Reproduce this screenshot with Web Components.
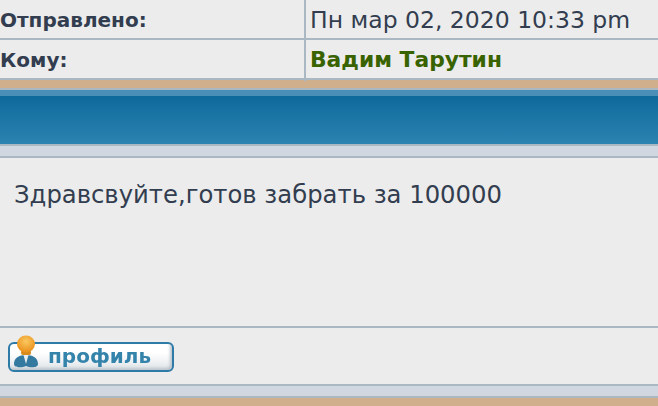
<!DOCTYPE html>
<html>
<head>
<meta charset="utf-8">
<style>
  html, body { margin: 0; padding: 0; }
  body { width: 658px; height: 406px; overflow: hidden; background: #ececec; font-family: "DejaVu Sans", sans-serif; color: #323d4f; }
</style>
</head>
<body>
<post-head>
  <head-row label="Отправлено:">Пн мар 02, 2020 10:33 pm</head-row>
  <head-row label="Кому:" strong>Вадим Тарутин</head-row>
</post-head>
<band-bar kind="tan"></band-bar>
<band-bar kind="blue"></band-bar>
<band-bar kind="pale"></band-bar>
<post-body>Здравсвуйте,готов забрать за 100000</post-body>
<post-foot><profile-button>профиль</profile-button></post-foot>
<band-bar kind="pale"></band-bar>
<band-bar kind="tan"></band-bar>

<script>
class PostHead extends HTMLElement {
  constructor () {
    super()
    this.attachShadow({ mode: 'open' }).innerHTML = `
      <style>:host { display: block; }</style>
      <slot></slot>`
  }
}

class HeadRow extends HTMLElement {
  constructor () {
    super()
    this.attachShadow({ mode: 'open' }).innerHTML = `
      <style>
        :host {
          display: grid;
          grid-template-columns: 304px 1fr;
          height: 40px;
          box-sizing: border-box;
          border-bottom: 2px solid #a9b8c2;
        }
        #label {
          font-size: 20px;
          font-weight: bold;
          line-height: 41px;
          white-space: nowrap;
        }
        #value {
          border-left: 2px solid #a9b8c2;
          padding-left: 4px;
          font-size: 23.5px;
          line-height: 40px;
          white-space: nowrap;
        }
        :host([strong]) #value {
          font-size: 21.8px;
          font-weight: bold;
          color: #386300;
        }
      </style>
      <div id="label"></div>
      <div id="value"><slot></slot></div>`
  }

  connectedCallback () {
    this.shadowRoot.getElementById('label').textContent = this.getAttribute('label')
  }
}

class BandBar extends HTMLElement {
  constructor () {
    super()
    this.attachShadow({ mode: 'open' }).innerHTML = `
      <style>
        :host { display: block; box-sizing: border-box; }
        :host([kind=tan]) { height: 10px; background: #d0b08c; border-bottom: 2px solid #a9b8c2; }
        :host([kind=blue]) {
          height: 54px;
          border-top: 6px solid #4a8fb5;
          background: linear-gradient(#0f6a9c, #2a83b0);
        }
        :host([kind=pale]) {
          height: 14px;
          background: #d1d7e0;
          border-top: 2px solid #a9b8c2;
          border-bottom: 2px solid #a9b8c2;
        }
      </style>`
  }
}

class PostBody extends HTMLElement {
  constructor () {
    super()
    this.attachShadow({ mode: 'open' }).innerHTML = `
      <style>
        :host {
          display: block;
          box-sizing: border-box;
          height: 168px;
          padding: 21px 0 0 14px;
          font-size: 24.3px;
          line-height: 32px;
        }
      </style>
      <slot></slot>`
  }
}

class PostFoot extends HTMLElement {
  constructor () {
    super()
    this.attachShadow({ mode: 'open' }).innerHTML = `
      <style>
        :host {
          display: block;
          box-sizing: border-box;
          height: 58px;
          padding: 14px 0 0 8px;
          border-top: 2px solid #a9b8c2;
        }
      </style>
      <slot></slot>`
  }
}

class ProfileButton extends HTMLElement {
  constructor () {
    super()
    this.attachShadow({ mode: 'open' }).innerHTML = `
      <style>
        :host {
          display: block;
          position: relative;
          box-sizing: border-box;
          width: 166px;
          height: 30px;
          border: 2px solid #2f7ba8;
          border-radius: 6px;
          background: linear-gradient(#ffffff 35%, #dfe4e8);
          box-shadow: inset -2px -2px 3px #bcc5cc;
        }
        #text {
          color: #3483ab;
          font-size: 20px;
          font-weight: bold;
          line-height: 25px;
          padding-left: 38px;
          filter: blur(0.7px);
        }
        svg { position: absolute; left: 3px; top: -9px; filter: blur(0.6px); }
      </style>
      <svg width="28" height="34" viewBox="0 0 28 34">
        <defs>
          <radialGradient id="skin" cx="50%" cy="35%" r="65%">
            <stop offset="0" stop-color="#fbc860"/>
            <stop offset="1" stop-color="#e98f18"/>
          </radialGradient>
        </defs>
        <path d="M1 29 C1 23 6 20 13 20 C20 20 25 23 25 29 C25 33 17 33 13 31 C9 33 1 33 1 29Z" fill="#34799f"/>
        <path d="M10.5 20 L13 29 L15.5 20Z" fill="#e8eef2"/>
        <rect x="8" y="15" width="10" height="5" rx="2" fill="#d98a1c"/>
        <ellipse cx="13" cy="9" rx="9" ry="8.5" fill="url(#skin)"/>
      </svg>
      <div id="text"><slot></slot></div>`
  }
}

customElements.define('post-head', PostHead)
customElements.define('head-row', HeadRow)
customElements.define('band-bar', BandBar)
customElements.define('post-body', PostBody)
customElements.define('post-foot', PostFoot)
customElements.define('profile-button', ProfileButton)
</script>
</body>
</html>
